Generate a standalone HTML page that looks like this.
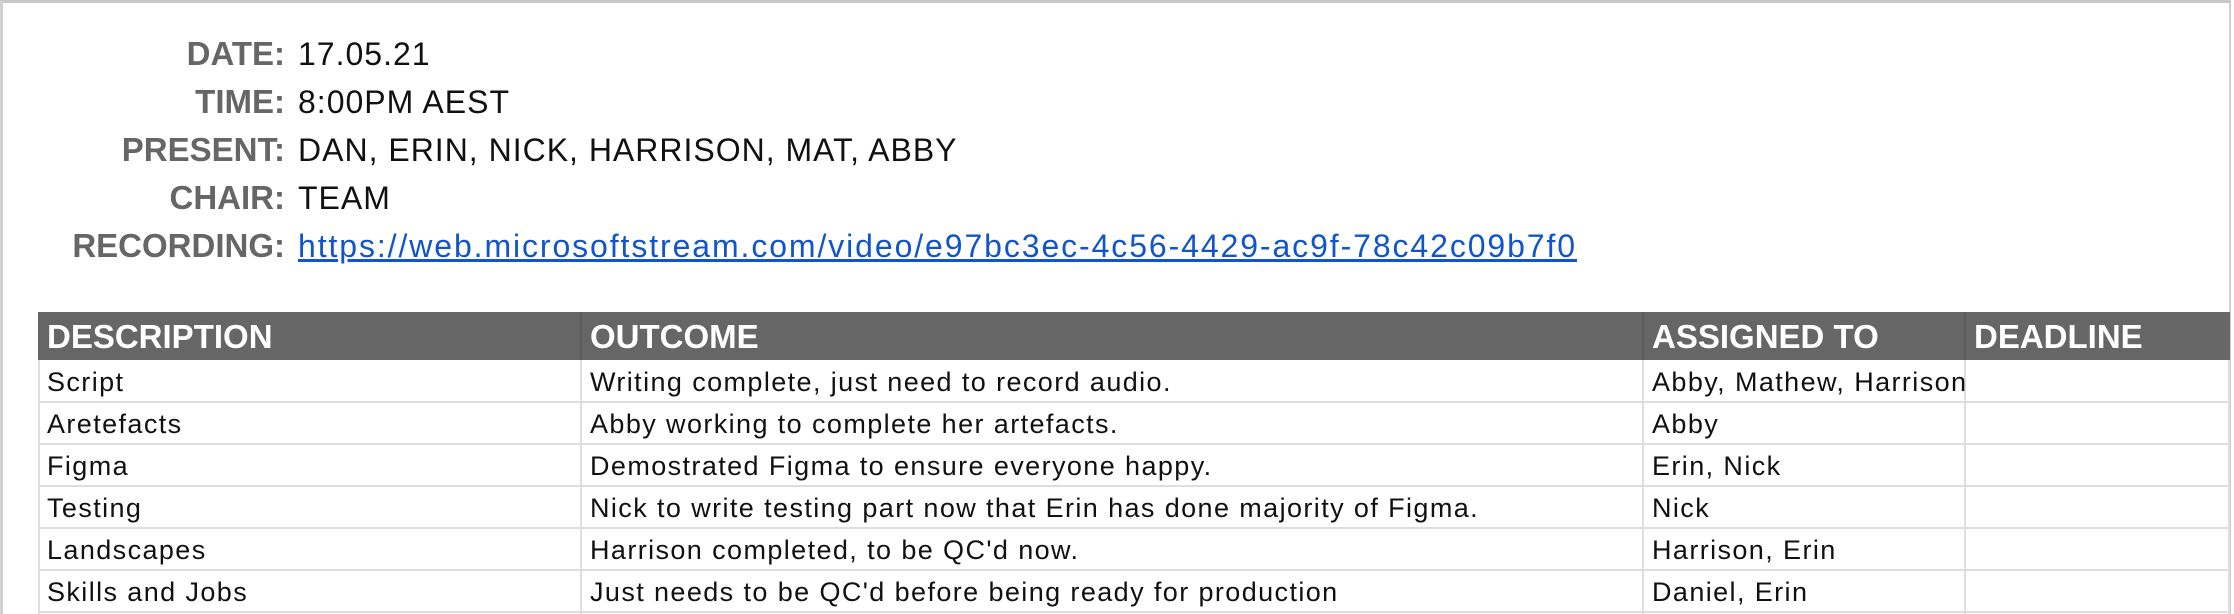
<!DOCTYPE html>
<html><head><style>
body{margin:0;width:2234px;height:614px;overflow:hidden;background:#fff;font-family:"Liberation Sans",sans-serif;position:relative}
.frame{position:absolute;left:0;top:0;width:2231px;height:614px;border-top:3px solid #c8c8c8;border-left:3px solid #d0d0d0;border-right:2px solid #d0d0d0;box-sizing:border-box}
.lab{position:absolute;right:1949px;font-weight:bold;color:#666;font-size:33px;line-height:48px}
.val{position:absolute;left:298px;color:#111;font-size:32px;letter-spacing:1px;line-height:48px;white-space:nowrap}
a{color:#1155cc;text-decoration:underline;letter-spacing:1.9px}
.hd{position:absolute;left:38px;top:312px;width:2192px;height:48px;background:#666}
.h{position:absolute;top:312px;height:48px;line-height:50px;color:#fff;font-weight:bold;font-size:33px;white-space:nowrap}
.hl{position:absolute;top:312px;height:48px;width:2px;background:#5c5c5c}
.vl{position:absolute;top:360px;height:254px;width:2px;background:#dedede}
.hr{position:absolute;left:38px;width:2192px;height:2px;background:#dedede}
.c{position:absolute;font-size:27px;letter-spacing:1.4px;line-height:42px;color:#111;white-space:nowrap}
</style></head><body>
<div class="frame"></div>
<div class="lab" style="top:30px">DATE:</div><div class="val" style="top:30px">17.05.21</div>
<div class="lab" style="top:78px">TIME:</div><div class="val" style="top:78px">8:00PM AEST</div>
<div class="lab" style="top:126px">PRESENT:</div><div class="val" style="top:126px">DAN, ERIN, NICK, HARRISON, MAT, ABBY</div>
<div class="lab" style="top:174px">CHAIR:</div><div class="val" style="top:174px">TEAM</div>
<div class="lab" style="top:222px">RECORDING:</div><div class="val" style="top:222px"><a>https://web.microsoftstream.com/video/e97bc3ec-4c56-4429-ac9f-78c42c09b7f0</a></div>

<div class="hd"></div>
<div class="hl" style="left:580px"></div><div class="hl" style="left:1642px"></div><div class="hl" style="left:1964px"></div>
<div class="h" style="left:47px">DESCRIPTION</div>
<div class="h" style="left:590px">OUTCOME</div>
<div class="h" style="left:1652px">ASSIGNED TO</div>
<div class="h" style="left:1974px">DEADLINE</div>

<div class="vl" style="left:38px"></div><div class="vl" style="left:580px"></div><div class="vl" style="left:1642px"></div><div class="vl" style="left:1964px"></div><div class="vl" style="left:2228px"></div>
<div class="hr" style="top:401px"></div><div class="hr" style="top:443px"></div><div class="hr" style="top:485px"></div><div class="hr" style="top:527px"></div><div class="hr" style="top:569px"></div><div class="hr" style="top:611px"></div>

<div class="c" style="left:47px;top:361px">Script</div><div class="c" style="left:590px;top:361px">Writing complete, just need to record audio.</div><div class="c" style="left:1652px;top:361px">Abby, Mathew, Harrison</div>
<div class="c" style="left:47px;top:403px">Aretefacts</div><div class="c" style="left:590px;top:403px">Abby working to complete her artefacts.</div><div class="c" style="left:1652px;top:403px">Abby</div>
<div class="c" style="left:47px;top:445px">Figma</div><div class="c" style="left:590px;top:445px">Demostrated Figma to ensure everyone happy.</div><div class="c" style="left:1652px;top:445px">Erin, Nick</div>
<div class="c" style="left:47px;top:487px">Testing</div><div class="c" style="left:590px;top:487px">Nick to write testing part now that Erin has done majority of Figma.</div><div class="c" style="left:1652px;top:487px">Nick</div>
<div class="c" style="left:47px;top:529px">Landscapes</div><div class="c" style="left:590px;top:529px">Harrison completed, to be QC'd now.</div><div class="c" style="left:1652px;top:529px">Harrison, Erin</div>
<div class="c" style="left:47px;top:571px">Skills and Jobs</div><div class="c" style="left:590px;top:571px">Just needs to be QC'd before being ready for production</div><div class="c" style="left:1652px;top:571px">Daniel, Erin</div>
</body></html>
